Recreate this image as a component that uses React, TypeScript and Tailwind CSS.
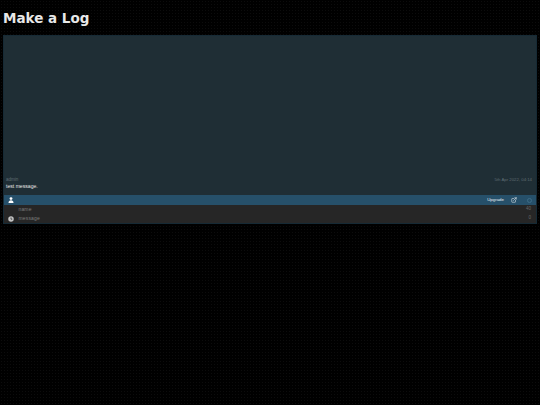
import { ExternalLink } from "lucide-react";

const font = { fontFamily: '"Liberation Sans", sans-serif' };

function FieldRow(props: { label: string; icon?: boolean; hint: string }) {
  return (
    <div className="flex h-[9px] items-center">
      <div className="flex w-[13px] justify-center">
        {props.icon && (
          <svg width="6" height="6" viewBox="0 0 12 12">
            <circle cx="6" cy="6" r="5.5" fill="#c4c4c4" />
            <path d="M6 3v3.4h2.6" fill="none" stroke="#262626" strokeWidth="1.4" />
          </svg>
        )}
      </div>
      <span className="ml-[1.5px] text-[5px] leading-none tracking-[0.15px] text-[#7c7c7c]">{props.label}</span>
      <span className="ml-auto pr-[5px] text-[4.5px] leading-none text-[#666]">{props.hint}</span>
    </div>
  );
}

export default function App() {
  return (
    <div
      className="h-[405px] w-[540px] overflow-hidden bg-black bg-[radial-gradient(#0c0c0c_0.7px,transparent_0.8px)] bg-[length:3px_3px] px-[3px]"
      style={font}
    >
      <h1 className="pt-[10px] font-['DejaVu_Sans',sans-serif] text-[13.5px] font-bold leading-[16px] text-[#e8e8e8]">Make a Log</h1>
      <div className="mt-[9px] flex h-[189px] flex-col border border-[#162a35] bg-[#1f2e35]">
        <div className="flex-1" />
        <div className="flex items-center justify-between px-[2px]">
          <span className="text-[4.5px] leading-[7px] text-[#5f6d74]">admin</span>
          <span className="pr-[2px] text-[4.3px] leading-[7px] text-[#5f6d74]">5th Apr 2022, 04:14</span>
        </div>
        <p className="px-[2px] pb-[5px] text-[5.1px] leading-[7px] text-[#e8e8e8]">test message.</p>
        <div className="flex h-[10px] items-center bg-[#26506a]">
          <div className="flex w-[13px] justify-center">
            <svg width="6" height="6" viewBox="0 0 12 12" fill="#fff">
              <circle cx="6" cy="3.2" r="2.8" />
              <path d="M1 12c0-3.6 2-5.4 5-5.4s5 1.8 5 5.4z" />
            </svg>
          </div>
          <div className="ml-auto flex items-center">
            <span className="text-[4.4px] leading-none text-[#e8eef2]">Upgrade</span>
            <ExternalLink size={6} className="ml-[7px] text-white" />
            <div className="ml-[10px] mr-[4px] h-[5px] w-[5px] rounded-full border border-[#3d6c86]" />
          </div>
        </div>
        <div className="bg-[#262626]">
          <FieldRow label="name" hint="40" />
          <FieldRow label="message" icon hint="0" />
        </div>
      </div>
    </div>
  );
}
